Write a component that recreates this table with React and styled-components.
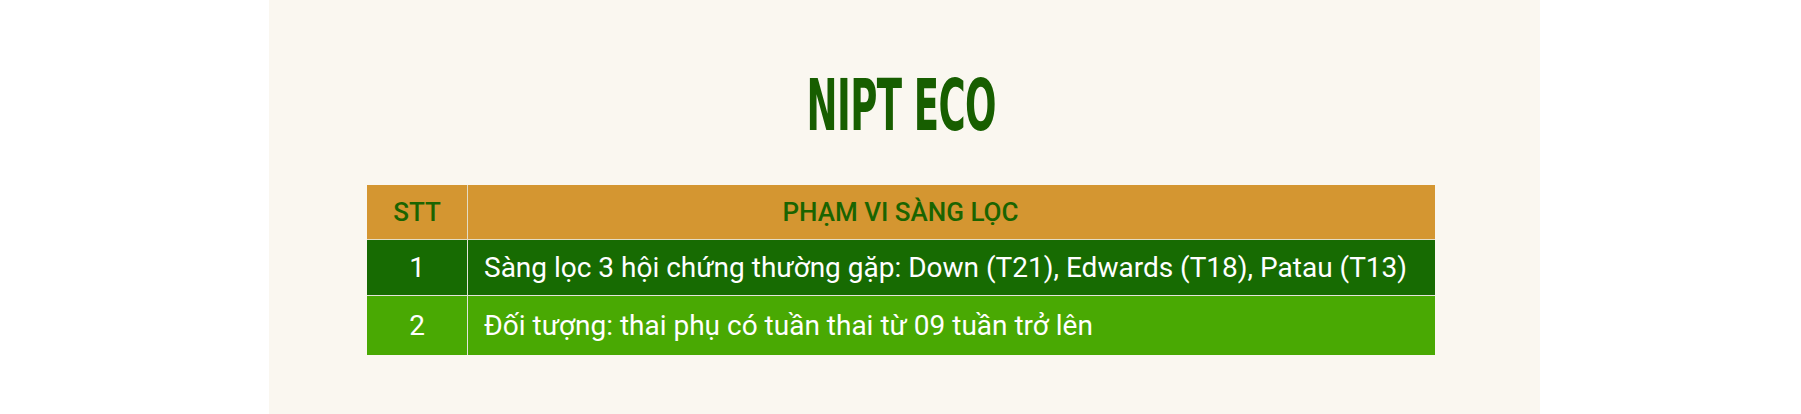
import styled, { createGlobalStyle } from "styled-components";

const GlobalStyle = createGlobalStyle`
  html, body {
    margin: 0;
    padding: 0;
    background: #fff;
  }
  body {
    font-family: Roboto, "Noto Sans", sans-serif;
  }
`;

const Page = styled.div`
  display: flex;
  justify-content: center;
  padding-left: 8px;
  min-height: 414px;
`;

const Panel = styled.section`
  width: 1271px;
  min-height: 414px;
  box-sizing: border-box;
  background: #faf7f0;
  padding: 70px 105px 0 98px;
  display: flex;
  flex-direction: column;
  align-items: center;
`;

const Title = styled.h2`
  margin: 0;
  font-family: "DejaVu Sans Condensed", "DejaVu Sans", sans-serif;
  font-weight: 700;
  font-size: 71px;
  line-height: 1;
  color: #175e00;
  letter-spacing: -1px;
  transform: scaleX(0.58);
  white-space: nowrap;
`;

const Table = styled.table`
  margin-top: 44px;
  width: 1068px;
  border-collapse: collapse;
  font-family: Roboto, "Noto Sans", sans-serif;
`;

const HeadCell = styled.th`
  background: #d49631;
  color: #1a6400;
  font-size: 26px;
  font-weight: 500;
  height: 54px;
  padding: 0 ${({ $shift }) => $shift || 0}px 0 0;
  text-align: center;
  border: 1px solid #e3dcc4;
  border-top: 0;
  border-left: 0;
  &:last-child {
    border-right: 0;
  }
`;

const Row = styled.tr`
  background: ${({ $tone }) => $tone};
`;

const Cell = styled.td`
  color: #fff;
  font-size: 28px;
  height: ${({ $h }) => $h}px;
  padding: 0 16px;
  text-align: ${({ $center }) => ($center ? "center" : "left")};
  width: ${({ $center }) => ($center ? "100px" : "auto")};
  box-sizing: border-box;
  border: 1px solid #e3e3dc;
  border-left: 0;
  &:last-child {
    border-right: 0;
  }
  tr:last-child & {
    border-bottom: 0;
  }
`;

const rows = [
  {
    no: 1,
    text: "Sàng lọc 3 hội chứng thường gặp: Down (T21), Edwards (T18), Patau (T13)",
    tone: "#176b02",
    h: 56,
  },
  {
    no: 2,
    text: "Đối tượng: thai phụ có tuần thai từ 09 tuần trở lên",
    tone: "#49a903",
    h: 59,
  },
];

export default function App() {
  return (
    <>
      <GlobalStyle />
      <Page>
        <Panel>
          <Title>NIPT ECO</Title>
          <Table>
            <thead>
              <tr>
                <HeadCell style={{ width: 100 }}>STT</HeadCell>
                <HeadCell $shift={102}>PHẠM VI SÀNG LỌC</HeadCell>
              </tr>
            </thead>
            <tbody>
              {rows.map((r) => (
                <Row key={r.no} $tone={r.tone}>
                  <Cell $center $h={r.h}>
                    {r.no}
                  </Cell>
                  <Cell $h={r.h}>{r.text}</Cell>
                </Row>
              ))}
            </tbody>
          </Table>
        </Panel>
      </Page>
    </>
  );
}
